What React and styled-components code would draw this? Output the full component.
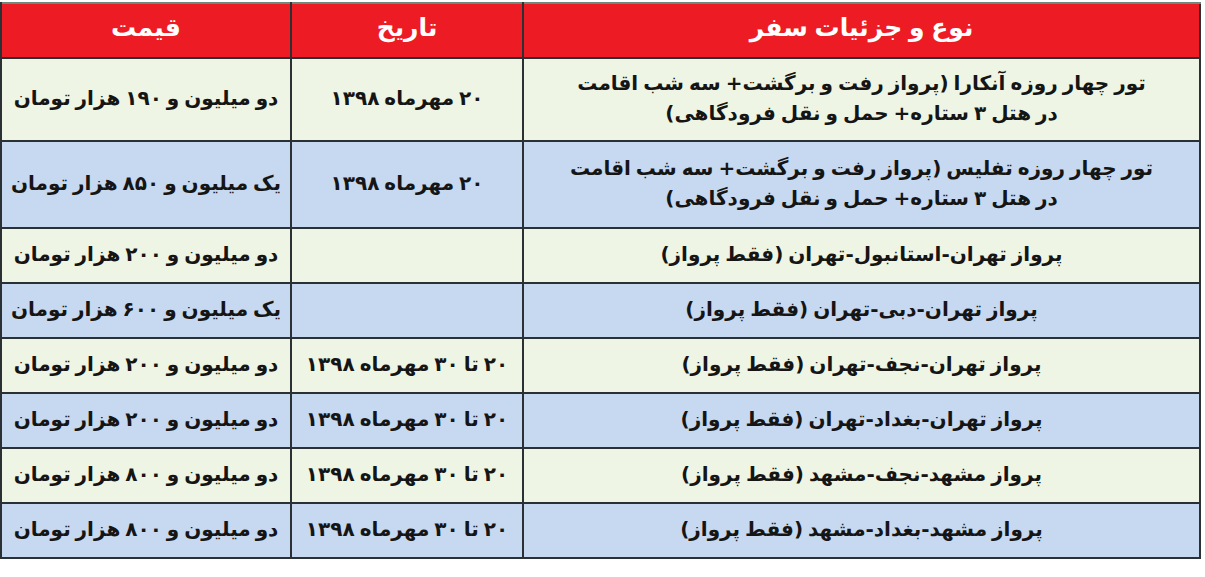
import styled, { createGlobalStyle } from "styled-components";

const rows = [
  {
    trip: ["تور چهار روزه آنکارا (پرواز رفت و برگشت+ سه شب اقامت", "در هتل ۳ ستاره+ حمل و نقل فرودگاهی)"],
    date: "۲۰ مهرماه ۱۳۹۸",
    price: "دو میلیون و ۱۹۰ هزار تومان",
    height: 83,
  },
  {
    trip: ["تور چهار روزه تفلیس (پرواز رفت و برگشت+ سه شب اقامت", "در هتل ۳ ستاره+ حمل و نقل فرودگاهی)"],
    date: "۲۰ مهرماه ۱۳۹۸",
    price: "یک میلیون و ۸۵۰ هزار تومان",
    height: 87,
  },
  { trip: ["پرواز تهران-استانبول-تهران (فقط پرواز)"], date: "", price: "دو میلیون و ۲۰۰ هزار تومان" },
  { trip: ["پرواز تهران-دبی-تهران (فقط پرواز)"], date: "", price: "یک میلیون و ۶۰۰ هزار تومان" },
  { trip: ["پرواز تهران-نجف-تهران (فقط پرواز)"], date: "۲۰ تا ۳۰ مهرماه ۱۳۹۸", price: "دو میلیون و ۲۰۰ هزار تومان" },
  { trip: ["پرواز تهران-بغداد-تهران (فقط پرواز)"], date: "۲۰ تا ۳۰ مهرماه ۱۳۹۸", price: "دو میلیون و ۲۰۰ هزار تومان" },
  { trip: ["پرواز مشهد-نجف-مشهد (فقط پرواز)"], date: "۲۰ تا ۳۰ مهرماه ۱۳۹۸", price: "دو میلیون و ۸۰۰ هزار تومان" },
  { trip: ["پرواز مشهد-بغداد-مشهد (فقط پرواز)"], date: "۲۰ تا ۳۰ مهرماه ۱۳۹۸", price: "دو میلیون و ۸۰۰ هزار تومان" },
];

function App() {
  return (
    <>
      <GlobalStyle />
      <Page>
        <Table>
          <colgroup>
            <col style={{ width: 677 }} />
            <col style={{ width: 232 }} />
            <col style={{ width: 290 }} />
          </colgroup>
          <thead>
            <tr>
              <Th>نوع و جزئیات سفر</Th>
              <Th>تاریخ</Th>
              <Th>قیمت</Th>
            </tr>
          </thead>
          <tbody>
            {rows.map((row, i) => (
              <Row key={i} $alt={i % 2 === 1} $height={row.height || 55}>
                <Td>
                  {row.trip.map((line, j) => (
                    <Line key={j}>{line}</Line>
                  ))}
                </Td>
                <Td>{row.date}</Td>
                <Td>{row.price}</Td>
              </Row>
            ))}
          </tbody>
        </Table>
      </Page>
    </>
  );
}

const GlobalStyle = createGlobalStyle`
  body {
    margin: 0;
    background: #ffffff;
    font-family: "DejaVu Sans", sans-serif;
  }
`;

const Page = styled.div`
  padding: 2px 4px 0 0;
`;

const Table = styled.table`
  direction: rtl;
  width: 1201px;
  table-layout: fixed;
  border-collapse: collapse;
  border: 2px solid #2b3034;
  border-top-color: #6f8a7c;
`;

const Th = styled.th`
  height: 47px;
  padding: 0 0 6px;
  background: #ed1c24;
  color: #ffffff;
  font-size: 25px;
  font-weight: bold;
  text-align: center;
  border: 2px solid #2b3034;
  border-top-color: #6f8a7c;
  word-spacing: -2px;
`;

const Row = styled.tr`
  height: ${(p) => p.$height}px;
  background: ${(p) => (p.$alt ? "#c7d9f0" : "#eff5e4")};
`;

const Td = styled.td`
  padding: 0 4px 4px;
  border: 2px solid #2b3034;
  color: #151515;
  font-size: 20px;
  font-weight: bold;
  text-align: center;
  white-space: nowrap;
  word-spacing: -2px;
`;

const Line = styled.div`
  line-height: 30px;
`;

export default App;
